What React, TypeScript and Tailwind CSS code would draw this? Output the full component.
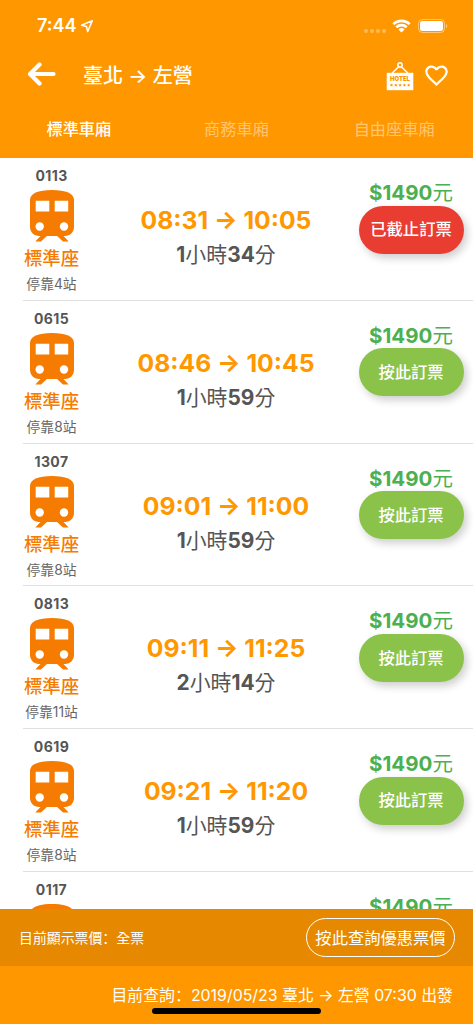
import { MdFavoriteBorder } from "react-icons/md";

interface Train {
  no: string;
  depart: string;
  arrive: string;
  hours: number;
  minutes: number;
  stops: number;
  closed?: boolean;
}

const TRAINS: Train[] = [
  { no: "0113", depart: "08:31", arrive: "10:05", hours: 1, minutes: 34, stops: 4, closed: true },
  { no: "0615", depart: "08:46", arrive: "10:45", hours: 1, minutes: 59, stops: 8 },
  { no: "1307", depart: "09:01", arrive: "11:00", hours: 1, minutes: 59, stops: 8 },
  { no: "0813", depart: "09:11", arrive: "11:25", hours: 2, minutes: 14, stops: 11 },
  { no: "0619", depart: "09:21", arrive: "11:20", hours: 1, minutes: 59, stops: 8 },
];

const TABS = ["標準車廂", "商務車廂", "自由座車廂"];

function TrainIcon() {
  return (
    <svg width="44" height="52" viewBox="0 0 44 52" className="block shrink-0">
      <path d="M11.500 45h6.500L11 51.400H5.300zM32.500 45H26l7 6.400h5.700z" fill="#f57c00" />
      <path d="M0 10C0 3.500 8 0 22 0s22 3.500 22 10v27c0 5-4 9-9 9H9c-5 0-9-4-9-9z" fill="#f57c00" />
      <path d="M5.700 10.800h13.600v10.600H5.700zM24.700 10.800h13.500v10.600H24.700z" fill="#fff" />
      <circle cx="9.700" cy="36.500" r="4.200" fill="#fff" />
      <circle cx="34" cy="36.500" r="4.200" fill="#fff" />
    </svg>
  );
}

function HotelIcon() {
  return (
    <svg width="28" height="29" viewBox="0 0 28 29" className="block">
      <circle cx="14" cy="3" r="2.100" fill="none" stroke="#fff" strokeWidth="1.600" />
      <path d="M12.600 4.700L6 11.200M15.400 4.700l6.600 6.500" stroke="#fff" strokeWidth="1.500" />
      <path d="M.7 10.800h26.600v17.400H.7z" fill="#fff" />
      <text x="14" y="19.300" textAnchor="middle" textLength="20" lengthAdjust="spacingAndGlyphs" fontSize="6.500" fontWeight="900" fontFamily="Inter, sans-serif" fill="#ff9800">HOTEL</text>
      {[5.5, 9.8, 14.1, 18.4, 22.7].map(x => (
        <path key={x} transform={`translate(${x} 23)`} d="M0-1.600l.5 1.100 1.200.1-.9.8.3 1.200L0 1l-1.100.6.3-1.200-.9-.8 1.200-.1z" fill="#ff9800" />
      ))}
    </svg>
  );
}

function StatusBar() {
  return (
    <div className="flex h-[52px] items-center pl-[37px] pr-[25px]">
      <span className="text-[18px] font-semibold leading-6">7:44</span>
      <svg width="14" height="14" viewBox="0 0 14 14" className="ml-1">
        <path d="M12.300 1.600L1.500 6.300l5 1.200 1.200 5z" fill="none" stroke="#fff" strokeWidth="1.500" strokeLinejoin="round" />
      </svg>
      <div className="ml-auto flex gap-[2px] pt-[9px]">
        {[0, 1, 2, 3].map(i => <span key={i} className="size-[4px] rounded-full bg-white/35" />)}
      </div>
      <svg width="19" height="14" viewBox="0 0 19 14" className="ml-[6px]">
        <path d="M.4 4.200a13 13 0 0 1 18.200 0l-1.800 1.900a10.500 10.500 0 0 0-14.600 0z" fill="#fff" />
        <path d="M3.400 7.300a8.700 8.700 0 0 1 12.200 0l-1.900 1.900a6.100 6.100 0 0 0-8.400 0z" fill="#fff" />
        <path d="M6.400 10.400a4.500 4.500 0 0 1 6.200 0l-3.100 3.200z" fill="#fff" />
      </svg>
      <svg width="30" height="14" viewBox="0 0 30 14" className="ml-[7px]">
        <rect x=".5" y=".5" width="26" height="13" rx="4" fill="none" stroke="#fff" strokeOpacity=".45" />
        <rect x="2" y="2" width="23" height="10" rx="2.500" fill="#fff" />
        <path d="M28 5c1.600.6 1.600 3.400 0 4z" fill="#fff" fillOpacity=".5" />
      </svg>
    </div>
  );
}

function TrainRow({ train }: { train: Train }) {
  return (
    <div className="flex h-[142.800px] shrink-0">
      <div className="flex w-[103px] shrink-0 flex-col items-center pt-2">
        <span className="text-[14px] font-bold leading-5 tracking-[0.4px] text-[#555]">{train.no}</span>
        <div className="mt-1">
          <TrainIcon />
        </div>
        <span className="mt-[4px] text-[18.400px] font-medium leading-6 text-[#f57c00]">標準座</span>
        <span className="mt-[6px] text-[13.800px] leading-4 text-[#666]">停靠{train.stops}站</span>
      </div>
      <div className="flex w-[246px] shrink-0 flex-col items-center whitespace-nowrap pt-[47px]">
        <span className="text-[24.700px] font-bold leading-[30px] text-[#ff9800]">{train.depart} → {train.arrive}</span>
        <span className="mt-1 text-[20.900px] leading-[31px] text-[#555]">
          <b>{train.hours}</b>小時<b>{train.minutes}</b>分
        </span>
      </div>
      <div className="flex w-[124px] shrink-0 flex-col items-center pt-[22px]">
        <span className="text-[20.500px] leading-[25px] text-[#4caf50]">
          <b>$1490</b>元
        </span>
        <button
          className={`mt-[0.500px] h-12 w-[105px] rounded-full text-[16.300px] font-medium text-white shadow-[3px_4px_8px_rgba(0,0,0,0.2)] ${train.closed ? "bg-[#ea3d32]" : "bg-[#8bc34a]"}`}
        >
          {train.closed ? "已截止訂票" : "按此訂票"}
        </button>
      </div>
    </div>
  );
}

// the next train only peeks out above the fare bar
function NextTrain() {
  return (
    <div className="flex h-[38px] overflow-hidden">
      <div className="flex w-[103px] shrink-0 flex-col items-center pt-2">
        <span className="text-[14px] font-bold leading-5 tracking-[0.4px] text-[#555]">0117</span>
        <div className="mt-1">
          <TrainIcon />
        </div>
      </div>
      <div className="ml-[246px] w-[124px] pt-[22px] text-center text-[20.500px] leading-[25px] text-[#4caf50]">
        <b>$1490</b>元
      </div>
    </div>
  );
}

function Divider() {
  return <div className="-mt-px ml-[23px] h-px bg-[#e0e0e0]" />;
}

export default function App() {
  return (
    <div className="flex h-[1024px] w-[473px] flex-col overflow-hidden bg-white font-['Inter','Noto_Sans_CJK_TC',sans-serif]">
      <header className="h-[158px] shrink-0 bg-[#ff9800] text-white">
        <StatusBar />
        <div className="flex h-12 items-center pl-[27px] pr-[23px]">
          <svg width="29" height="24" viewBox="0 0 29 24" className="-mt-[4px]">
            <path d="M12.500 2.500L3 12l9.500 9.500M3.500 12H26.500" fill="none" stroke="#fff" strokeWidth="4.200" strokeLinecap="round" strokeLinejoin="round" />
          </svg>
          <h1 className="ml-[27px] text-[20px] font-medium leading-6">臺北 → 左營</h1>
          <div className="ml-auto">
            <HotelIcon />
          </div>
          <MdFavoriteBorder className="-mt-px ml-[9px] size-[27px]" />
        </div>
        <nav className="grid h-[58px] grid-cols-3 items-center text-center text-[16.200px]">
          {TABS.map((tab, i) => (
            <span key={tab} className={i === 0 ? "font-medium" : "text-white/45"}>{tab}</span>
          ))}
        </nav>
      </header>

      <main className="min-h-0 flex-1 overflow-hidden">
        {TRAINS.map(train => (
          <div key={train.no}>
            <TrainRow train={train} />
            <Divider />
          </div>
        ))}
        <NextTrain />
      </main>

      <div className="flex h-[57px] shrink-0 items-center justify-between bg-[#e68900] pl-[19px] pr-[18px] text-white">
        <span className="pt-px text-[13.900px]">目前顯示票價<span className="font-['Noto_Sans_CJK_SC']">：</span>全票</span>
        <button className="h-[39px] w-[149px] whitespace-nowrap rounded-full border border-white pt-px text-[16.300px]">按此查詢優惠票價</button>
      </div>
      <footer className="h-[58px] shrink-0 bg-[#ff9800] text-white">
        <p className="whitespace-nowrap pr-[20px] pt-[17px] text-right text-[15.900px] leading-6">
          目前查詢<span className="font-['Noto_Sans_CJK_SC']">：</span>2019/05/23 臺北 → 左營 07:30 出發
        </p>
        <div className="mx-auto h-[6px] w-[169px] rounded-full bg-black" />
      </footer>
    </div>
  );
}
